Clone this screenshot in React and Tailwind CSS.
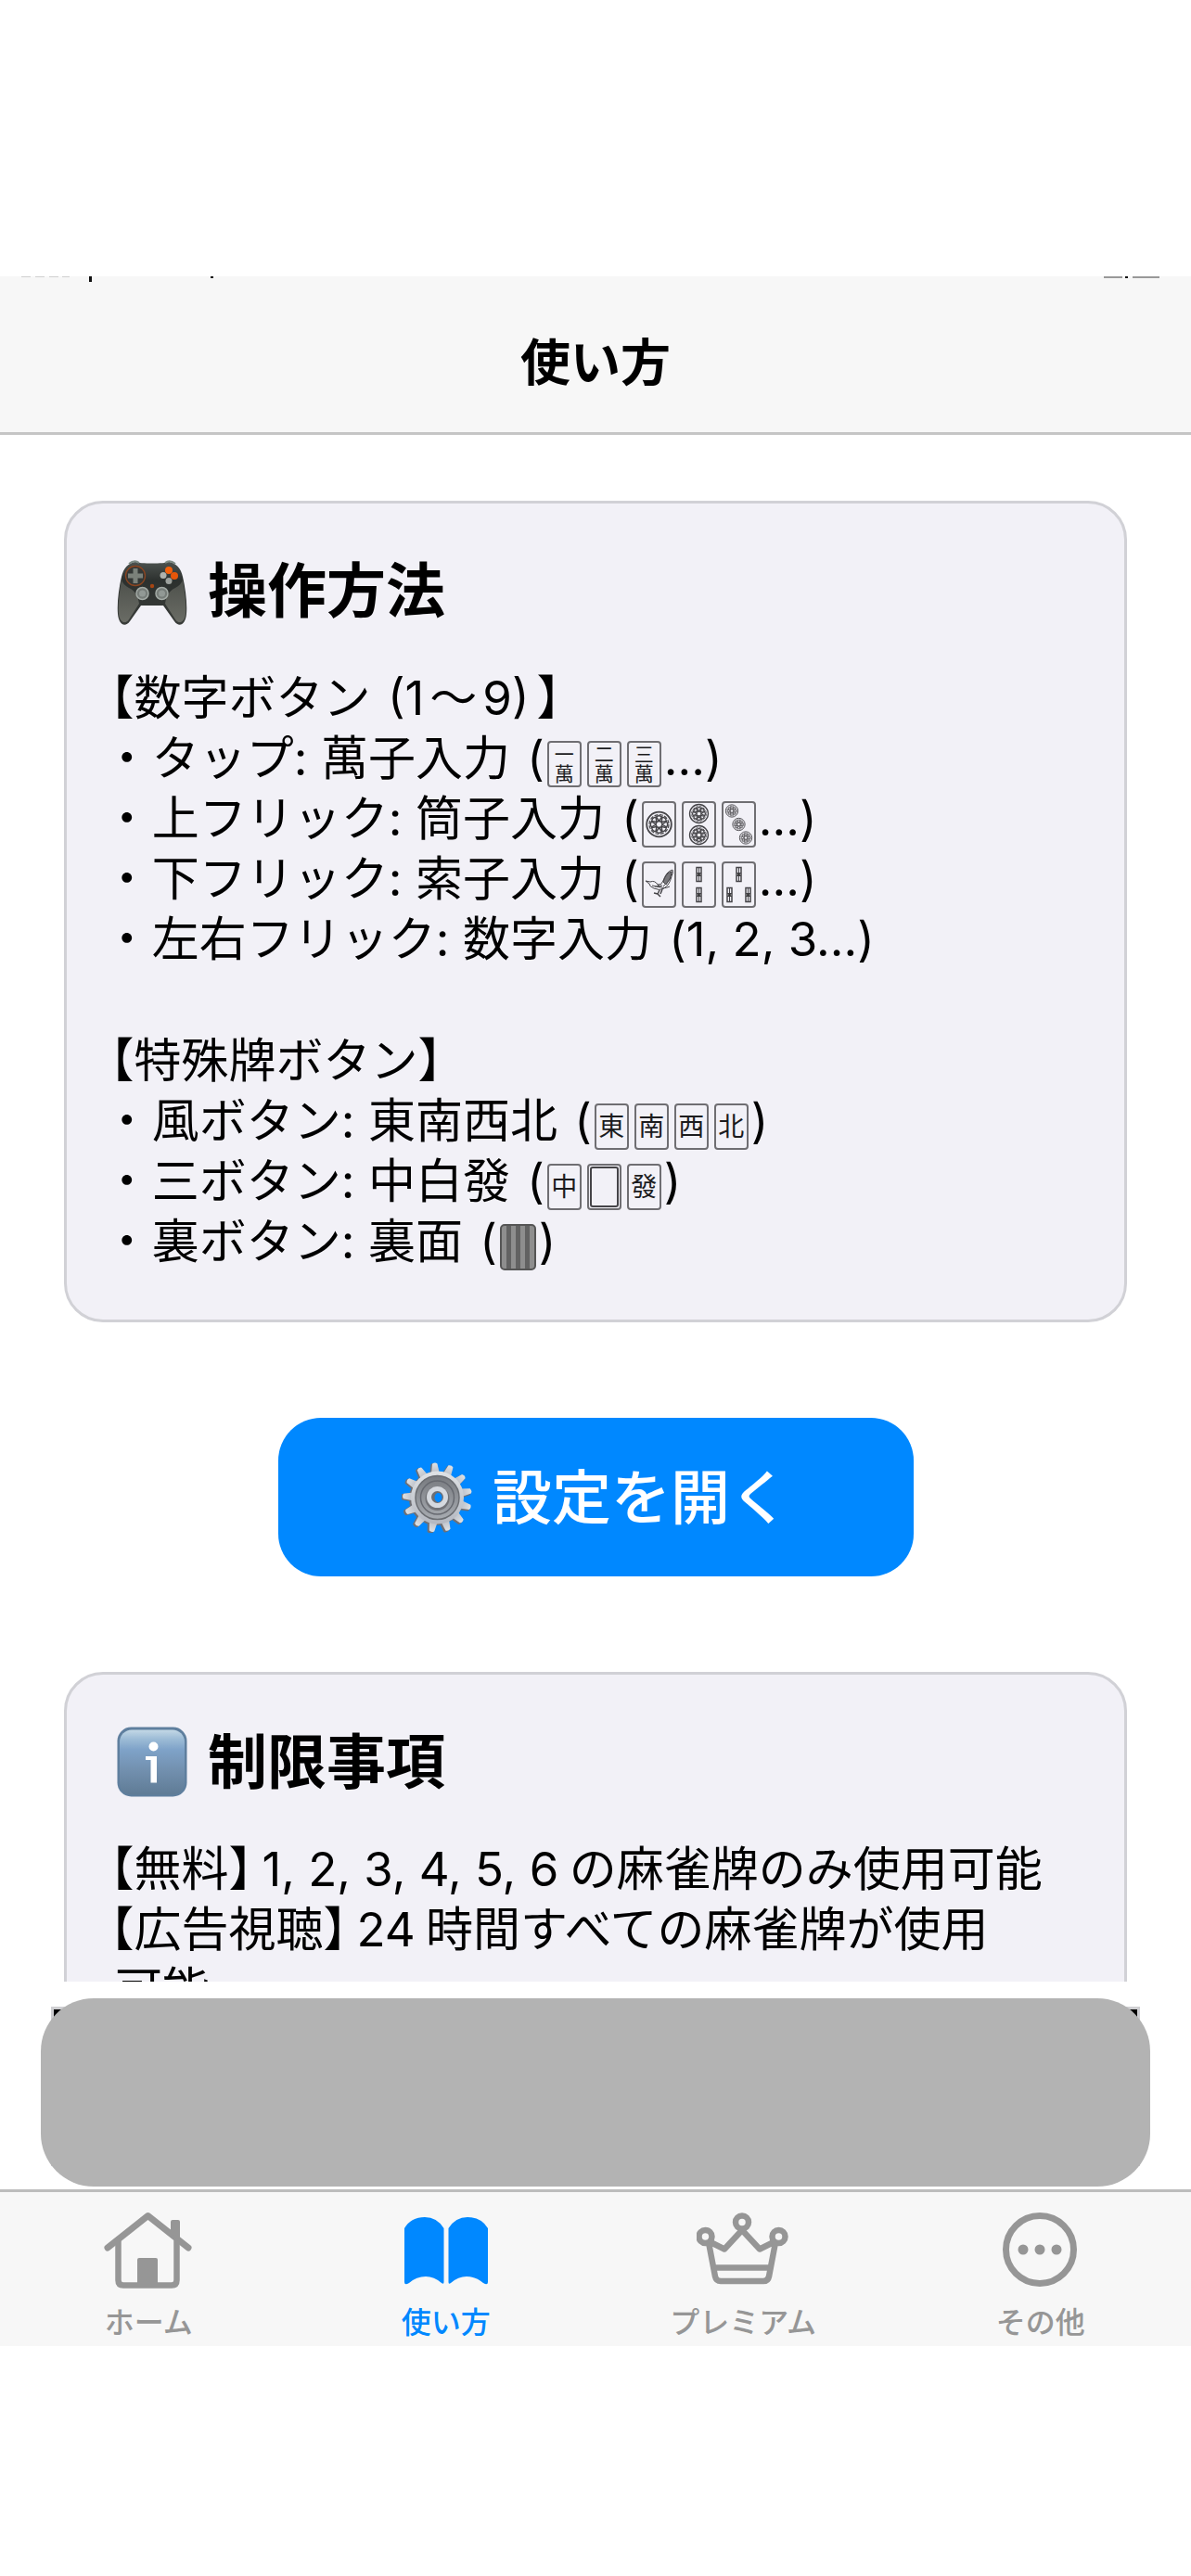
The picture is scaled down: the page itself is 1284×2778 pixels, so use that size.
import React from "react";

function Gamepad() {
  return (
    <svg viewBox="0 0 76 76" className="size-[76px] shrink-0" aria-hidden="true">
      <defs>
        <linearGradient id="padBody" x1="0" y1="0" x2="0" y2="1">
          <stop offset="0" stopColor="#4c524f" />
          <stop offset="0.3" stopColor="#2c302e" />
          <stop offset="1" stopColor="#3a3d3a" />
        </linearGradient>
        <linearGradient id="padGrip" x1="0" y1="0" x2="0" y2="1">
          <stop offset="0" stopColor="#4d504b" />
          <stop offset="1" stopColor="#6a6c65" />
        </linearGradient>
      </defs>
      <path d="M20 7C12 8 7 14 5 23C2 36 0 52 1 63C2 75 9 78 14 71L26 54H50L62 71C67 78 74 75 75 63C76 52 74 36 71 23C69 14 64 8 56 7C51 9 25 9 20 7Z" fill="url(#padBody)" />
      <path d="M5 26C3 38 1 53 2 63C3 72 9 75 13 69L24 52C23 45 20 38 13 35C9 33 6 30 5 26ZM71 26C73 38 75 53 74 63C73 72 67 75 63 69L52 52C53 45 56 38 63 35C67 33 70 30 71 26Z" fill="url(#padGrip)" />
      <path d="M13 9Q19 4 24 8M63 9Q57 4 52 8" fill="none" stroke="#7d8a84" strokeWidth="2" />
      <circle cx="20" cy="22" r="10.5" fill="#343836" stroke="#8a4420" strokeWidth="1.3" />
      <path d="M17.500 14h5v5.500h5.500v5h-5.500v5.500h-5v-5.500h-5.500v-5h5.500z" fill="#7b817a" />
      <circle cx="56" cy="16" r="4" fill="#f4600c" />
      <circle cx="62" cy="22" r="4" fill="#e6560a" />
      <circle cx="50" cy="21.500" r="3.500" fill="#aeb2ae" />
      <circle cx="56" cy="27.500" r="3.500" fill="#9da19d" />
      <circle cx="38" cy="33" r="2.200" fill="#a54513" />
      <circle cx="27.500" cy="41" r="6.500" fill="#777d79" stroke="#a3aaa5" strokeWidth="1.5" />
      <circle cx="48.500" cy="41" r="6.500" fill="#777d79" stroke="#a3aaa5" strokeWidth="1.5" />
      <circle cx="27.500" cy="41" r="3.500" fill="#929995" />
      <circle cx="48.500" cy="41" r="3.500" fill="#929995" />
    </svg>
  );
}

function InfoBadge() {
  return (
    <svg viewBox="0 0 76 76" className="size-[76px] shrink-0" aria-hidden="true">
      <defs>
        <linearGradient id="infoFill" x1="0" y1="0" x2="0" y2="1">
          <stop offset="0" stopColor="#c3d8e6" />
          <stop offset="0.14" stopColor="#9dbcd6" />
          <stop offset="0.3" stopColor="#7fa3c9" />
          <stop offset="0.6" stopColor="#7391b0" />
          <stop offset="1" stopColor="#5f7b95" />
        </linearGradient>
      </defs>
      <rect x="0.500" y="0.500" width="75" height="75" rx="15" fill="#5f7f9e" />
      <rect x="3" y="3.500" width="70" height="70" rx="13" fill="url(#infoFill)" />
      <circle cx="39.500" cy="21.500" r="5" fill="#fff" />
      <path d="M31 32h12v28.500h-6.500V36H31z" fill="#fff" />
    </svg>
  );
}

function Gear() {
  const teeth = Array.from({ length: 13 }, (_, i) => (i * 360) / 13 - 4);
  return (
    <svg viewBox="0 0 76 76" className="size-[76px] shrink-0" aria-hidden="true">
      <defs>
        <linearGradient id="gearFace" x1="0" y1="0" x2="0" y2="1">
          <stop offset="0" stopColor="#dfe2e5" />
          <stop offset="1" stopColor="#b4b8c1" />
        </linearGradient>
        <linearGradient id="gearDish" x1="0" y1="0" x2="0" y2="1">
          <stop offset="0" stopColor="#777a7f" />
          <stop offset="1" stopColor="#a7abb1" />
        </linearGradient>
      </defs>
      <g fill="#6f7076">
        <circle cx="37" cy="39" r="29" />
        {teeth.map((a) => (
          <path key={a} d="M32 14L34 2Q37 0 40 2L42 14Z" transform={`rotate(${a} 37 39)`} />
        ))}
      </g>
      <g fill="url(#gearFace)">
        {teeth.map((a) => (
          <path key={a} d="M33.500 14L35.500 1.500Q38.500 -0.500 41 1.500L43 14Z" transform={`rotate(${a} 38.500 38)`} />
        ))}
        <circle cx="38.500" cy="38" r="28.500" />
      </g>
      <circle cx="38.500" cy="38" r="23.500" fill="url(#gearDish)" stroke="#6b6e73" strokeWidth="1.5" />
      <circle cx="38.500" cy="38" r="18" fill="none" stroke="#666970" strokeWidth="1.5" />
      <circle cx="38.500" cy="39" r="13" fill="#717378" />
      <circle cx="38.500" cy="37.500" r="11.500" fill="#d5d9df" />
      <circle cx="38.500" cy="37.500" r="6.500" fill="#6b6e74" />
      <ellipse cx="39.500" cy="38" rx="4" ry="5" fill="#0088ff" />
    </svg>
  );
}

function Tile({ children }) {
  return (
    <span className="flex h-[50px] w-[37px] shrink-0 flex-col items-center justify-center rounded-[4px] border-2 border-[#6f6e72] text-[#1c1c1e]">
      {children}
    </span>
  );
}

function Man({ n }) {
  return (
    <Tile>
      <span className="text-[21px] leading-[21px]">{n}</span>
      <span className="text-[21px] leading-[21px]">萬</span>
    </Tile>
  );
}

function Honor({ c }) {
  return (
    <Tile>
      <span className="text-[28px] leading-[30px]">{c}</span>
    </Tile>
  );
}

function Art({ children }) {
  return (
    <Tile>
      <svg viewBox="0 0 33 46" className="h-[46px] w-[33px]" fill="none" stroke="#454448" aria-hidden="true">
        {children}
      </svg>
    </Tile>
  );
}

function Coin({ x, y, r }) {
  return (
    <g transform={`translate(${x} ${y}) scale(${r / 14})`}>
      <circle r="13.300" strokeWidth="1.800" />
      <circle r="10.500" strokeWidth="1.200" strokeDasharray="4 1.500" />
      <circle r="3.500" strokeWidth="1.500" />
      {[0, 45, 90, 135, 180, 225, 270, 315].map((a) => (
        <path key={a} d="M0 -3.500L-3 -8Q0 -10.500 3 -8Z" strokeWidth="1.500" transform={`rotate(${a})`} />
      ))}
    </g>
  );
}

function Stick({ x, y }) {
  return (
    <g transform={`translate(${x} ${y})`}>
      <rect x="-2.500" y="-7.500" width="5" height="15" strokeWidth="1.500" />
      <path d="M-2.500 -1.500h5M-2.500 1.500h5M0 -7v14" strokeWidth="1" />
      <circle r="1.500" fill="#333" stroke="none" />
    </g>
  );
}

function Bird() {
  return (
    <g strokeWidth="1">
      <path d="M2 19L7 20Q12 18 15 23Q19 24 21 19Q24 9 31 7Q32 10 30 14Q28 23 22 27Q17 30 11 27Q6 25 6 22Z" />
      <path d="M15 23Q20 29 28 25M21 19Q25 11 31 9M22 22Q27 16 31 11M21 25L30 15M9 24L18 26M12 25L20 24" />
      <path d="M21 20Q24 10 30 9Q30 16 24 23Z" fill="#77767a" />
      <path d="M17 29L15 33M15 33L11 32M15 33L18 36M20 28L18 33" strokeWidth="1.500" />
    </g>
  );
}

function Line({ children }) {
  return <li className="flex h-[65px] items-center whitespace-pre">{children}</li>;
}

function Tiles({ children }) {
  return <span className="mx-[3px] mt-[12px] flex gap-[6px]">{children}</span>;
}

function Open() {
  return <span className="ml-[4px]">(</span>;
}

function Num({ children }) {
  return <span className="mr-[5px]">{children}</span>;
}

function Bracketed({ children }) {
  return (
    <>
      <span className="-ml-[5px]">【</span>
      {children}
      <span className="-mr-[4px]">】</span>
    </>
  );
}

function Card({ icon, title, children }) {
  return (
    <section className="w-full rounded-[42px] border-[3px] border-[#d1d1d6] bg-[#f2f1f7] px-[52px] pt-[56px] pb-[52px]">
      <h2 className="flex h-[76px] items-center gap-[22px] pl-[2px] text-[64px] font-bold leading-[76px]">
        {icon}
        <span>{title}</span>
      </h2>
      <div className="mt-[45px] text-[51px] leading-[65px] [font-feature-settings:'halt'] [text-autospace:normal]">
        {children}
      </div>
    </section>
  );
}

function TabIcon({ children }) {
  return (
    <svg viewBox="0 0 100 90" className="h-[90px] w-[100px]" fill="none" stroke="currentColor" strokeLinecap="round" strokeLinejoin="round" aria-hidden="true">
      {children}
    </svg>
  );
}

const tabs = [
  {
    label: "ホーム",
    icon: (
      <TabIcon>
        <path d="M6 43L49.500 8.500L93 43" strokeWidth="7" />
        <path d="M17.500 36V78Q17.500 83.500 23 83.500H75Q80.500 83.500 80.500 78V36" strokeWidth="6.500" />
        <path d="M38 56Q38 54 40 54H58Q60 54 60 56V83H38Z" fill="currentColor" stroke="none" />
        <path d="M74 28V15Q74 13 76 13H82Q84 13 84 15V37Z" fill="currentColor" stroke="none" />
      </TabIcon>
    ),
  },
  {
    label: "使い方",
    active: true,
    icon: (
      <TabIcon>
        <g fill="currentColor" stroke="none">
          <path d="M5 22Q12 10 27 10Q40 10 47.500 22V80Q47.500 83 45 81Q37 74 28 74Q18 74 10 81Q5 84 5 80Z" />
          <path d="M52.500 22Q60 10 73 10Q88 10 95 22V80Q95 84 90 81Q82 74 72 74Q63 74 55 81Q52.500 83 52.500 80Z" />
        </g>
      </TabIcon>
    ),
  },
  {
    label: "プレミアム",
    icon: (
      <TabIcon>
        <g strokeWidth="6.500">
          <circle cx="9.500" cy="31" r="7" />
          <circle cx="49" cy="15.500" r="7" />
          <circle cx="88.500" cy="31" r="7" />
          <path d="M15 37L30 44.500L49 24L68 44.500L83 37M13.500 40L20 74Q21 79 26 79H72Q77 79 78 74L84.500 40M19 64.500H79" />
        </g>
      </TabIcon>
    ),
  },
  {
    label: "その他",
    icon: (
      <TabIcon>
        <circle cx="49" cy="45" r="36.500" strokeWidth="7" />
        <g fill="currentColor" stroke="none">
          <circle cx="31" cy="45" r="5.500" />
          <circle cx="49" cy="45" r="5.500" />
          <circle cx="67" cy="45" r="5.500" />
        </g>
      </TabIcon>
    ),
  },
];

export default function App() {
  return (
    <div
      lang="ja"
      className="flex h-screen w-full flex-col overflow-hidden bg-white pt-[298px] pb-[248px] font-['Inter','Noto_Sans_CJK_JP',sans-serif] text-black"
    >
      <header className="flex h-[171px] shrink-0 flex-col border-b-[3px] border-[#c5c5c5] bg-[#f7f7f7]">
        <div className="flex h-[8px] justify-between pr-[34px] pl-[23px]" aria-hidden="true">
          <svg viewBox="0 0 210 8" className="h-[8px] w-[210px]">
            <path d="M0 0h10v1H0zM15 0h10v1H15zM30 0h10v1H30zM44 0h8v1h-8z" fill="#d0d0d0" />
            <path d="M73 0h3v6h-3zM204 0h3v2h-3z" fill="#111" />
          </svg>
          <svg viewBox="0 0 60 8" className="h-[8px] w-[60px]">
            <path d="M0 0h20v2H0zM31 0h29v2H31z" fill="#999" />
            <path d="M23 0h3v2h-3z" fill="#111" />
          </svg>
        </div>
        <h1 className="flex flex-1 items-center justify-center pt-[12px] text-[54px] font-bold leading-[64px]">使い方</h1>
      </header>

      <main className="flex min-h-0 flex-1 flex-col items-center overflow-hidden px-[69px] pt-[71px]">
        <div className="flex w-full shrink-0 flex-col items-center">
          <Card icon={<Gamepad />} title="操作方法">
            <h3>
              <Bracketed>
                数字ボタン <Open />1<span className="mx-[6px]">〜</span>9<span className="mr-[8px]">)</span>
              </Bracketed>
            </h3>
            <ul>
              <Line>
                ・ タップ: 萬子入力 <Open />
                <Tiles><Man n="一" /><Man n="二" /><Man n="三" /></Tiles>
                ...)
              </Line>
              <Line>
                ・ 上フリック: 筒子入力 <Open />
                <Tiles>
                  <Art><Coin x={16.5} y={23} r={14} /></Art>
                  <Art><Coin x={16.5} y={11.500} r={10.5} /><Coin x={16.5} y={34.500} r={10.5} /></Art>
                  <Art><Coin x={9} y={8.500} r={7} /><Coin x={16.5} y={23} r={7} /><Coin x={24} y={37.500} r={7} /></Art>
                </Tiles>
                ...)
              </Line>
              <Line>
                ・ 下フリック: 索子入力 <Open />
                <Tiles>
                  <Art><Bird /></Art>
                  <Art><Stick x={16.5} y={12} /><Stick x={16.5} y={34} /></Art>
                  <Art><Stick x={16.5} y={12} /><Stick x={6.5} y={34} /><Stick x={26.5} y={34} /></Art>
                </Tiles>
                ...)
              </Line>
              <Line>・ 左右フリック: 数字入力 <Open />1, 2, 3...)</Line>
            </ul>
            <h3 className="mt-[66px]">
              <Bracketed>特殊牌ボタン</Bracketed>
            </h3>
            <ul>
              <Line>
                ・ 風ボタン: 東南西北 <Open />
                <Tiles><Honor c="東" /><Honor c="南" /><Honor c="西" /><Honor c="北" /></Tiles>
                )
              </Line>
              <Line>
                ・ 三ボタン: 中白發 <Open />
                <Tiles>
                  <Honor c="中" />
                  <Art><rect x="2" y="2" width="29" height="42" rx="2" strokeWidth="2" /></Art>
                  <Honor c="發" />
                </Tiles>
                )
              </Line>
              <Line>
                ・ 裏ボタン: 裏面 <Open />
                <Tiles>
                  <span className="h-[50px] w-[39px] rounded-[5px] border-2 border-[#555] bg-[repeating-linear-gradient(90deg,#8e8e8e_0px,#8e8e8e_5px,#626262_5px,#626262_10px)]" />
                </Tiles>
                )
              </Line>
            </ul>
          </Card>

          <button type="button" className="my-[103px] flex h-[171px] w-[685px] items-center justify-center gap-[22px] rounded-[46px] bg-[#0088ff] text-[64px] font-medium leading-[76px] text-white">
            <Gear />
            <span>設定を開く</span>
          </button>

          <Card icon={<InfoBadge />} title="制限事項">
            <p>
              <Bracketed>無料</Bracketed> <Num>1, 2, 3, 4, 5, 6</Num>の麻雀牌のみ使用可能
            </p>
            <p>
              <Bracketed>広告視聴</Bracketed> <Num>24</Num>時間すべての麻雀牌が使用<span className="inline-block">可能</span>
            </p>
          </Card>
        </div>
      </main>

      <aside className="relative flex shrink-0 px-[44px] pt-[18px] pb-[3px]" aria-label="広告">
        <div className="absolute inset-x-[55px] top-[27px] h-[172px] border-[3px] border-[#cfcfd2] bg-black" />
        <div className="relative h-[203px] w-full rounded-[57px] bg-[#b3b3b3]" />
      </aside>

      <nav className="grid h-[169px] shrink-0 grid-cols-4 border-t-[3px] border-[#bcbcbc] bg-[#f7f7f7] pr-[2px]">
        {tabs.map((t) => (
          <a
            key={t.label}
            href="#"
            aria-current={t.active ? "page" : undefined}
            className={`flex flex-col items-center gap-[14px] pt-[17px] text-[32px] font-medium leading-[40px] ${t.active ? "text-[#0088ff]" : "text-[#969696]"}`}
          >
            {t.icon}
            <span>{t.label}</span>
          </a>
        ))}
      </nav>
    </div>
  );
}
